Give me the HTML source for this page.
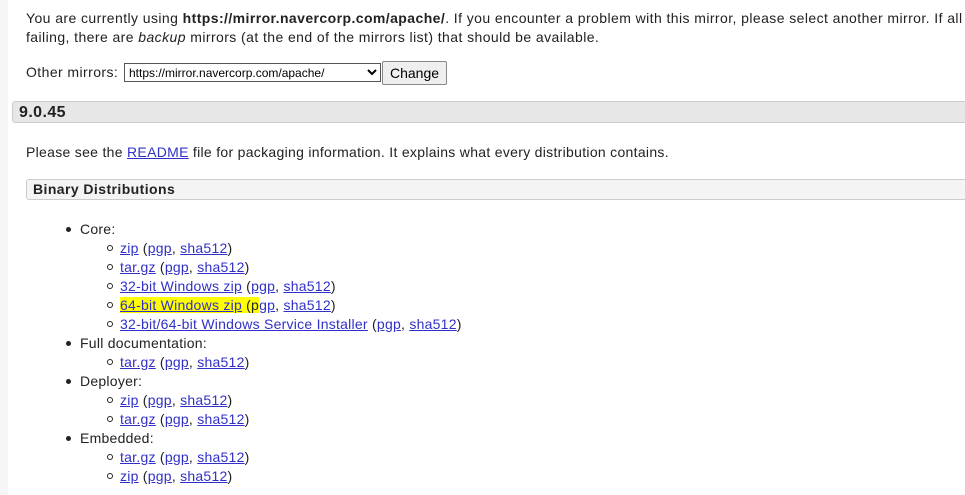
<!DOCTYPE html>
<html><head><style>
body{margin:0;background:#fff;font-family:"Liberation Sans",Arial,sans-serif;font-size:14px;letter-spacing:0.42px;color:#222;width:965px;height:495px;overflow:hidden;position:relative}
.strip{position:absolute;left:0;top:0;width:8px;height:495px;background:#f6f6f6}
.a{position:absolute;white-space:nowrap}
a{color:#3030c8;text-decoration:underline}
.h1{position:absolute;left:12px;top:101px;width:960px;height:22px;background:#e7e7e7;border:1px solid #ccc;border-radius:3px;font-size:16px;font-weight:bold;line-height:22px;box-sizing:border-box;padding-left:6px;color:#222}
.h2{position:absolute;left:26px;top:179px;width:945px;height:21px;background:#f4f4f4;border:1px solid #ccc;border-radius:3px;font-weight:bold;line-height:19px;box-sizing:border-box;padding-left:6px}
ul{margin:0;padding:0;list-style:none}
.l1{position:absolute;left:80px;top:220px;line-height:19px;letter-spacing:0.25px}
.l1>li{position:relative}
.l1>li:before{content:"";position:absolute;left:-14px;top:7px;width:5px;height:5px;border-radius:50%;background:#222}
.l2{margin-left:40px}
.l2 li{position:relative}
.l2 li:before{content:"";position:absolute;left:-13px;top:6px;width:4px;height:4px;border-radius:50%;border:1px solid #222}
select{position:absolute;left:124px;top:63px;width:257px;height:19px;font-size:12px;letter-spacing:0;font-family:"Liberation Sans",sans-serif;border:1px solid #555;background:#fff;padding:0}
button{position:absolute;left:382px;top:61px;width:65px;height:24px;font-size:14px;font-family:"Liberation Sans",sans-serif;background:#efefef;border:1px solid #888;border-radius:2px;padding:0}
mark{background:#ffff00;color:inherit}
</style></head><body>
<div class="strip"></div>
<div class="a" style="left:26px;top:9px;line-height:19px">You are currently using <b>https://mirror.navercorp.com/apache/</b>. If you encounter a problem with this mirror, please select another mirror. If all<br>failing, there are <i>backup</i> mirrors (at the end of the mirrors list) that should be available.</div>
<div class="a" style="left:26px;top:63px;line-height:19px">Other mirrors:</div>
<select><option>https://mirror.navercorp.com/apache/</option></select>
<button>Change</button>
<div class="h1">9.0.45</div>
<div class="a" style="left:26px;top:143px;line-height:19px;letter-spacing:0.3px">Please see the <a>README</a> file for packaging information. It explains what every distribution contains.</div>
<div class="h2">Binary Distributions</div>
<ul class="l1">
<li>Core:<ul class="l2">
<li><a>zip</a> (<a>pgp</a>, <a>sha512</a>)</li>
<li><a>tar.gz</a> (<a>pgp</a>, <a>sha512</a>)</li>
<li><a>32-bit Windows zip</a> (<a>pgp</a>, <a>sha512</a>)</li>
<li><mark><a>64-bit Windows zip</a> (p</mark><a>gp</a>, <a>sha512</a>)</li>
<li><a>32-bit/64-bit Windows Service Installer</a> (<a>pgp</a>, <a>sha512</a>)</li>
</ul></li>
<li>Full documentation:<ul class="l2"><li><a>tar.gz</a> (<a>pgp</a>, <a>sha512</a>)</li></ul></li>
<li>Deployer:<ul class="l2"><li><a>zip</a> (<a>pgp</a>, <a>sha512</a>)</li><li><a>tar.gz</a> (<a>pgp</a>, <a>sha512</a>)</li></ul></li>
<li>Embedded:<ul class="l2"><li><a>tar.gz</a> (<a>pgp</a>, <a>sha512</a>)</li><li><a>zip</a> (<a>pgp</a>, <a>sha512</a>)</li></ul></li>
</ul>
</body></html>
